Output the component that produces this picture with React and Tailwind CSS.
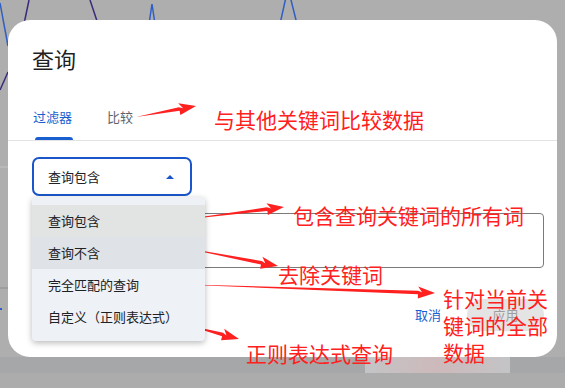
import React from "react";

const RED = "#ff2020";

// tapered arrow polygon: thin tail, filled head
function arrowPoints(x1, y1, x2, y2) {
  const dx = x2 - x1;
  const dy = y2 - y1;
  const len = Math.hypot(dx, dy);
  const ux = dx / len;
  const uy = dy / len;
  const nx = -uy;
  const ny = ux;
  const headLen = 17;
  const headW = 6;
  const neckW = 1.8;
  const bx = x2 - ux * headLen;
  const by = y2 - uy * headLen;
  const nbx = x2 - ux * (headLen - 4);
  const nby = y2 - uy * (headLen - 4);
  const pts = [
    [x1, y1],
    [bx + nx * neckW, by + ny * neckW],
    [bx + nx * headW, by + ny * headW],
    [x2, y2],
    [bx - nx * headW, by - ny * headW],
    [nbx - nx * 0.2, nby - ny * 0.2],
    [bx - nx * neckW, by - ny * neckW],
  ];
  return pts.map((p) => p.join(",")).join(" ");
}

const arrows = [
  [136, 117, 196, 106],
  [180, 220, 284, 207],
  [180, 247, 278, 266],
  [168, 284, 435, 293],
  [187, 325, 239, 339],
];

const menuItems = [
  { label: "查询包含", bg: "bg-[#e2e3e3]" },
  { label: "查询不含", bg: "bg-[#dfe3e8]" },
  { label: "完全匹配的查询", bg: "" },
  { label: "自定义（正则表达式）", bg: "" },
];

export default function App() {
  return (
    <div
      className="relative w-[565px] h-[388px] overflow-hidden bg-[#aeaeae] flex flex-col pt-[20px]"
      style={{ fontFamily: '"Noto Sans CJK SC", "Noto Sans", sans-serif' }}
    >
      {/* chart lines of the page behind the modal */}
      <svg className="absolute left-0 top-0" width="565" height="388">
        <polyline points="0,3 8,46" fill="none" stroke="#2f5fc4" strokeWidth="1.5" />
        <polyline points="8,72 0,90" fill="none" stroke="#3b2a7a" strokeWidth="1.5" />
        <polyline points="29,0 24,24" fill="none" stroke="#3b2a7a" strokeWidth="1.5" />
        <polyline points="90,0 98,24" fill="none" stroke="#3b2a7a" strokeWidth="1.5" />
        <polyline points="149,24 152,4 155,24" fill="none" stroke="#2f5fc4" strokeWidth="1.5" />
        <polyline points="280,24 288,-12 297,24" fill="none" stroke="#2f5fc4" strokeWidth="1.5" />
        <line x1="0" y1="167" x2="8" y2="167" stroke="#c4c4c4" strokeWidth="1" />
        <line x1="0" y1="288" x2="8" y2="288" stroke="#8e8e8e" strokeWidth="1" />
        <line x1="0" y1="309" x2="2" y2="309" stroke="#2f5fc4" strokeWidth="2" />
      </svg>

      {/* dialog */}
      <div className="relative ml-2 w-[549px] h-[337px] shrink-0 bg-white rounded-[22px] flex flex-col pt-6">
        <h2 className="pl-6 text-[22px] leading-[28px] text-[#1f1f1f]">查询</h2>

        <div className="mt-6 border-b border-[#e3e3e3] pl-6 flex gap-[34px] text-[13px]">
          <div className="flex flex-col items-center">
            <span className="h-[41px] flex items-center text-[#1a5fd0]">过滤器</span>
            <span className="h-[3px] w-[38px] ml-[3px] bg-[#1a5fd0] rounded-t-sm" />
          </div>
          <div className="flex flex-col">
            <span className="h-[41px] flex items-center text-[#5f6368]">比较</span>
          </div>
        </div>

        <div className="pl-6 pr-[13px] flex flex-col">
          <div className="relative mt-[16px] w-[160px]">
            <div className="h-[39px] border-2 border-[#1a56c9] rounded-[7px] flex items-center justify-between pl-[14px] pr-[16px] text-[13px] text-[#202124]">
              <span>查询包含</span>
              <span className="w-0 h-0 border-l-[4px] border-r-[4px] border-b-[4px] border-l-transparent border-r-transparent border-b-[#1a56c9]" />
            </div>

            {/* open dropdown menu */}
            <div className="absolute left-0 top-[40px] z-10 w-[173px] bg-[#eef1f6] rounded-[4px] shadow-[0_2px_6px_rgba(0,0,0,0.28)] pt-2 pb-2 text-[13px] text-[#202124]">
              {menuItems.map((m) => (
                <div key={m.label} className={`h-8 flex items-center pl-4 ${m.bg}`}>
                  {m.label}
                </div>
              ))}
            </div>
          </div>

          <div className="mt-[17px] h-[55px] border border-[#7a7a7a] rounded-[4px]" />

          <div className="mt-[31px] flex items-center justify-end gap-[26px] text-[13px]">
            <span className="text-[#1a5fd0]">取消</span>
            <span className="w-[77px] h-8 rounded-full bg-[#e4e4e4] text-[#9e9e9e] flex items-center justify-center">
              应用
            </span>
          </div>
        </div>
      </div>

      <div className="h-[16px] shrink-0 bg-[#a5a7a9] flex">
        <div className="ml-[365px] w-[145px] h-full bg-gradient-to-r from-[#c3c4c6] via-[#cdb9bb] to-[#c3c4c6]" />
      </div>
      <div className="flex-1 bg-[#acacac]" />

      {/* red annotations */}
      <svg className="absolute left-0 top-0 pointer-events-none" width="565" height="388">
        {arrows.map((a, i) => (
          <polygon key={i} points={arrowPoints(...a)} fill={RED} />
        ))}
      </svg>
      <div className="absolute inset-0 pointer-events-none text-[21px] leading-[21px] text-[#ff2020]">
        <span className="absolute left-[214px] top-[109px]">与其他关键词比较数据</span>
        <span className="absolute left-[293px] top-[205px]">包含查询关键词的所有词</span>
        <span className="absolute left-[278px] top-[264px]">去除关键词</span>
        <span className="absolute left-[443px] top-[285px] w-[110px] leading-[27px]">针对当前关键词的全部数据</span>
        <span className="absolute left-[246px] top-[343px]">正则表达式查询</span>
      </div>
    </div>
  );
}
